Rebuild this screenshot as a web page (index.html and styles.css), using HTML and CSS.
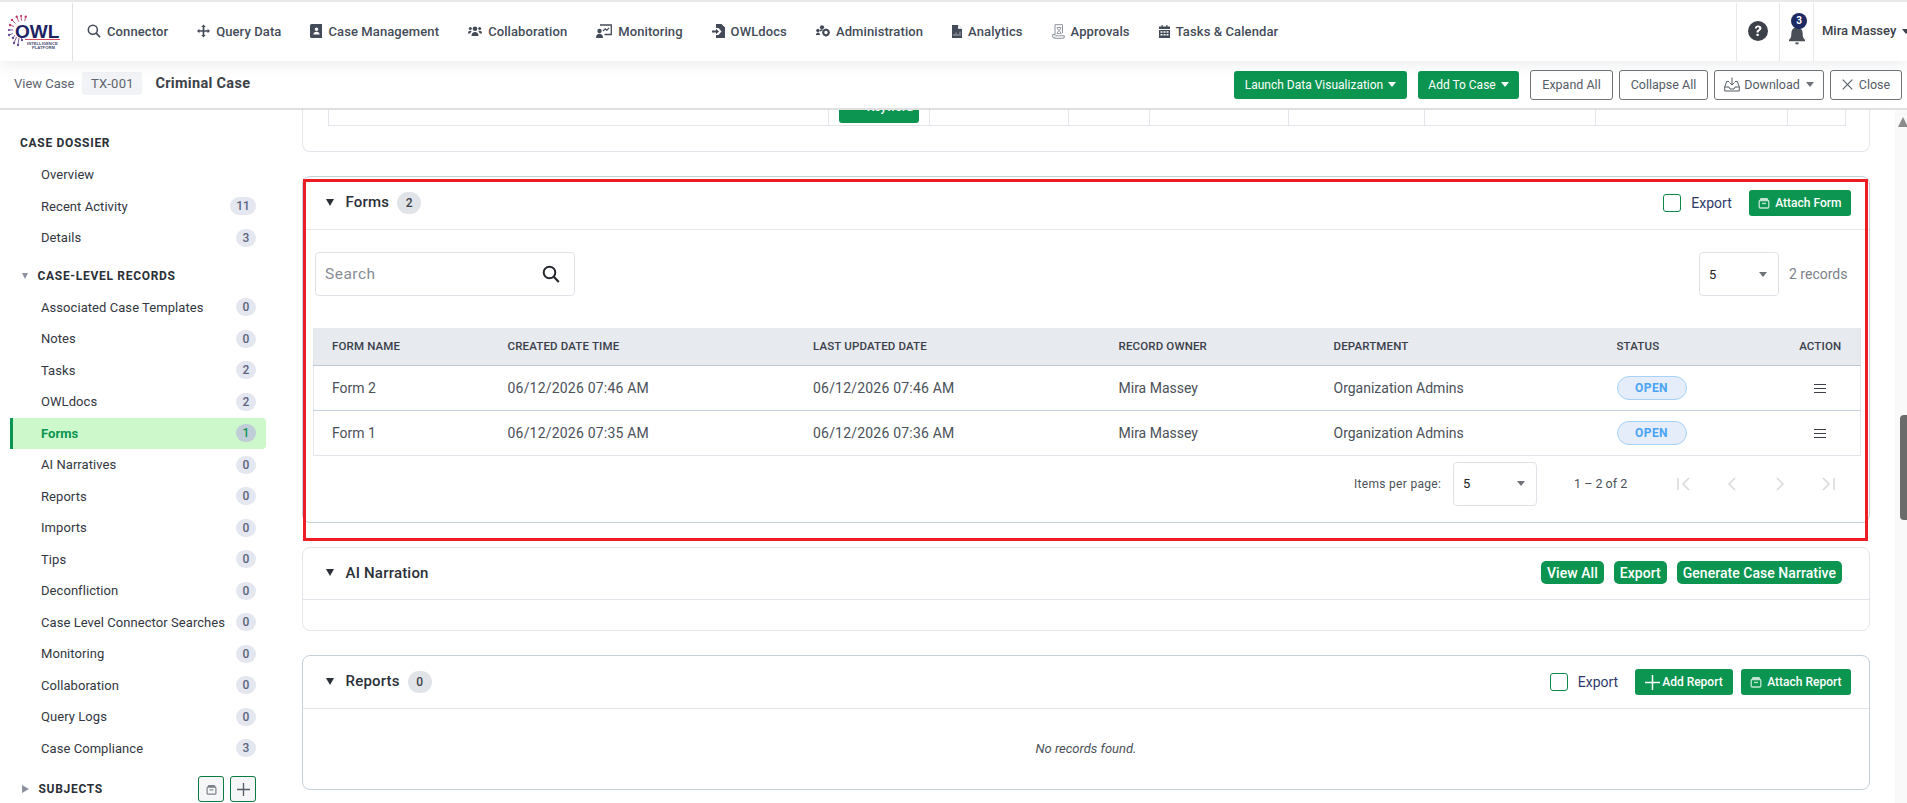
FILE: index.html
```html
<!DOCTYPE html>
<html lang="en">
<head>
    <meta charset="UTF-8">
    <title>View Case</title>
    <link rel="stylesheet" href="styles.css">
</head>
<body>
<svg class="defs" width="0" height="0">
    <symbol id="i-box" viewBox="0 0 12 12">
        <path d="M2.500 1h7l1 2.500h-9z" fill="currentColor"/>
        <rect x="1.200" y="3.500" width="9.600" height="7.500" rx="1" fill="none" stroke="currentColor" stroke-width="1.300"/>
        <rect x="4" y="5.800" width="4" height="1.300" fill="currentColor"/>
    </symbol>
    <symbol id="i-plus" viewBox="0 0 14 14">
        <path d="M7 0v14M0 7h14" fill="none" stroke="currentColor" stroke-width="1.400"/>
    </symbol>
    <symbol id="i-search" viewBox="0 0 18 18">
        <circle cx="7.500" cy="7.500" r="5.800" fill="none" stroke="currentColor" stroke-width="2"/>
        <path d="M11.800 11.800l5 5.200" fill="none" stroke="currentColor" stroke-width="2.200"/>
    </symbol>
</svg>

<!-- top navigation -->
<header class="topnav">
    <a class="logo">
        <svg width="60" height="36" viewBox="0 0 60 36">
            <g fill="none" stroke="#b0476f" stroke-width=".9">
                <path d="M4 5l3.500 3.500M8.700 1.700l2 5M13 .7l.5 5M17.700 1.700l-1 4.500M2 10l4 1.500"/>
            </g>
            <g fill="none" stroke="#6a4f95" stroke-width=".9">
                <path d="M0 15h5M1 20l4-1.500M5 23l2-3M6 28l2.500-6M10 30l1-7M14 25l-1-3"/>
            </g>
            <g fill="#c23a62">
                <circle cx="4" cy="5" r="1.200"/><circle cx="8.700" cy="1.700" r="1.200"/><circle cx="13" cy=".9" r="1"/><circle cx="17.700" cy="1.700" r="1.200"/><circle cx="2" cy="10" r="1.200"/>
            </g>
            <g fill="#6a4f95">
                <circle cx="1" cy="15" r="1.100"/><circle cx="1" cy="20" r="1.200"/><circle cx="5" cy="23" r="1.200"/><circle cx="6" cy="28" r="1.200"/><circle cx="10" cy="30" r="1.200"/><circle cx="14" cy="25" r="1.200"/>
            </g>
            <text class="logo-owl" x="7" y="23">OWL</text>
            <path d="M17 24.500H52" stroke="#d8475f" stroke-width="1.100"/>
            <text class="logo-sub" x="19" y="29.500">INTELLIGENCE</text>
            <text class="logo-sub" x="24" y="34">PLATFORM</text>
        </svg>
    </a>
    <nav class="menu">
        <a><svg class="ico" width="14" height="14" viewBox="0 0 18 18"><use href="#i-search"/></svg>Connector</a>
        <a><svg class="ico" width="13" height="14" viewBox="0 0 14 14"><path d="M7 0l2.400 2.600H7.900v3.500h3.500V4.600L14 7l-2.600 2.400V7.900H7.900v3.500h1.500L7 14l-2.400-2.600h1.500V7.900H2.600v1.500L0 7l2.600-2.400v1.500h3.500V2.600H4.600z" fill="currentColor"/></svg>Query Data</a>
        <a><svg class="ico" width="12" height="14" viewBox="0 0 12 14"><path d="M1.500 0H12v14H1.500A1.500 1.500 0 0 1 0 12.500V1.500A1.500 1.500 0 0 1 1.500 0zM6.500 3.500a1.800 1.800 0 1 0 0 3.600 1.800 1.800 0 0 0 0-3.600zM3.400 10.500h6.200c0-1.700-1.400-2.700-3.100-2.700s-3.100 1-3.100 2.700z" fill="currentColor" fill-rule="evenodd"/></svg>Case Management</a>
        <a><svg class="ico" width="14" height="12" viewBox="0 0 14 12"><circle cx="7" cy="3.800" r="2.300" fill="currentColor"/><path d="M3.500 11c0-2.600 1.400-4 3.500-4s3.500 1.400 3.500 4z" fill="currentColor"/><circle cx="2.300" cy="3.500" r="1.500" fill="currentColor"/><circle cx="11.700" cy="3.500" r="1.500" fill="currentColor"/><path d="M0 8.500C0 6.500 1 5.800 2.500 5.800c.6 0 1 .2 1.300.4C2.800 7 2.400 7.800 2.300 8.500zM14 8.500c0-2-1-2.700-2.500-2.700-.6 0-1 .2-1.300.4 1 .8 1.400 1.600 1.500 2.300z" fill="currentColor"/></svg>Collaboration</a>
        <a><svg class="ico" width="16" height="14" viewBox="0 0 16 14"><path d="M4 1h11.300v9.500H8.500" fill="none" stroke="currentColor" stroke-width="1.300"/><path d="M7 7l2.200-2.200 1.600 1.500L13 3.800" fill="none" stroke="currentColor" stroke-width="1.200"/><circle cx="3.500" cy="7" r="2.200" fill="currentColor"/><path d="M0 14c0-3 1.500-4.300 3.500-4.300S7 11 7 14z" fill="currentColor"/></svg>Monitoring</a>
        <a><svg class="ico" width="13" height="14" viewBox="0 0 13 14"><path d="M4 0h5.500L13 3.500V14H4v-3h2.500l3-3.500-3-3.500H4z" fill="currentColor"/><path d="M0 6.500h4V4.800l3 2.700-3 2.700V8.500H0z" fill="currentColor"/></svg>OWLdocs</a>
        <a><svg class="ico" width="14" height="12" viewBox="0 0 14 12"><circle cx="6" cy="2.300" r="2.100" fill="currentColor"/><circle cx="1.900" cy="5.500" r="1.700" fill="currentColor"/><path d="M0 10c0-1.500.8-2.500 2-2.500S4 8.500 4 10z" fill="currentColor"/><circle cx="10" cy="7.500" r="2.700" fill="none" stroke="currentColor" stroke-width="2"/><path d="M10 3.700v1.600M10 9.800v1.600M6.300 7.500h1.500M12.300 7.500h1.500" stroke="currentColor" stroke-width="1.300"/><path d="M4 6c.6-.8 1.200-1 2.500-1" stroke="currentColor" stroke-width="1.500" fill="none"/></svg>Administration</a>
        <a><svg class="ico" width="10" height="13" viewBox="0 0 10 13"><path d="M0 0h6.500L10 3.500V13H0z" fill="currentColor"/><path d="M6.500 0v3.500H10" fill="#fff" stroke="#fff" stroke-width=".7"/><path d="M2 11V9M4 11V7.500M6 11V9M8 11V6.500" stroke="#a9b0bb" stroke-width="1"/></svg>Analytics</a>
        <a><svg class="ico approvals" width="13" height="15" viewBox="0 0 13 15"><path d="M3 .7h7.500V9M2.500 14.300H11a1.300 1.300 0 0 0 1.300-1.300v-1.200H4M3 .7v11M3 12.500a1 1 0 0 1-2.300.5V10.500H3" fill="none" stroke="currentColor" stroke-width="1"/><path d="M5 3.500h4l-1.600 3 1.800 3H5l1.700-3z" fill="none" stroke="currentColor" stroke-width=".9"/></svg>Approvals</a>
        <a><svg class="ico" width="11" height="13" viewBox="0 0 11 13"><path d="M2.500 0h1.200v1.500h3.600V0h1.200v1.500H11V4H0V1.500h2.500zM0 5h11v8H0zM1.500 6.300v1.500h2V6.300zm3 0v1.500h2V6.300zm3 0v1.500h2V6.300zm-6 2.700v1.500h2V9zm3 0v1.500h2V9zm3 0v1.500h2V9z" fill="currentColor" fill-rule="evenodd"/></svg>Tasks &amp; Calendar</a>
    </nav>
    <div class="nav-right">
        <div class="nav-cell help">
            <svg width="20" height="20" viewBox="0 0 20 20"><circle cx="10" cy="10" r="10" fill="#3c4149"/><path d="M6.900 7.600C7 5.700 8.300 4.600 10.200 4.600c1.900 0 3.200 1.100 3.200 2.700 0 1.300-.8 2-1.800 2.600-.7.500-1 .8-1 1.600H8.500c0-1.500.5-2.200 1.500-2.800.8-.5 1.200-.8 1.200-1.400 0-.6-.4-1-1.100-1-.8 0-1.200.5-1.300 1.300z" fill="#fff"/><rect x="8.500" y="12.800" width="2.200" height="2.300" rx=".5" fill="#fff"/></svg>
        </div>
        <div class="nav-cell bell">
            <svg width="16" height="19" viewBox="0 0 17 20"><path d="M8.500 0c1 0 1.600.7 1.600 1.500C13 2.300 14.500 4.500 14.500 7.500c0 4 .8 5.500 2.500 7v1.500H0v-1.500c1.700-1.500 2.500-3 2.500-7C2.500 4.500 4 2.300 6.900 1.500 6.900.7 7.500 0 8.500 0zM6.500 17.500h4a2 2 0 0 1-4 0z" fill="#4a4f57"/></svg>
            <span class="bell-count">3</span>
        </div>
        <div class="nav-user">Mira Massey <i class="caret caret-dark"></i></div>
    </div>
</header>

<!-- case title bar -->
<div class="subbar">
    <span class="crumb">View Case</span>
    <span class="chip">TX-001</span>
    <span class="case-name">Criminal Case</span>
    <div class="actions">
        <button class="btn btn-green btn-launch">Launch Data Visualization <i class="caret"></i></button>
        <button class="btn btn-green btn-add">Add To Case <i class="caret"></i></button>
        <button class="btn btn-line btn-expand">Expand All</button>
        <button class="btn btn-line btn-collapse">Collapse All</button>
        <button class="btn btn-line btn-download">
            <svg width="16" height="15" viewBox="0 0 16 15"><path d="M8 .5v7M5.500 5.500L8 8l2.500-2.500M5 4.500H2.700L.7 10v4h14.600v-4l-2-5.500H11M.7 10h4.300l1 2h4l1-2h4.300" fill="none" stroke="currentColor" stroke-width="1"/></svg>
            Download <i class="caret caret-grey"></i>
        </button>
        <button class="btn btn-line btn-close">
            <svg width="11" height="11" viewBox="0 0 11 11"><path d="M.7.7l9.600 9.600M10.300.7L.7 10.300" stroke="currentColor" stroke-width="1.100"/></svg>
            Close
        </button>
    </div>
</div>

<div class="page">
    <!-- left sidebar -->
    <aside class="side">
        <div class="side-head">CASE DOSSIER</div>
        <a class="side-item">Overview</a>
        <a class="side-item">Recent Activity <span class="count">11</span></a>
        <a class="side-item">Details <span class="count">3</span></a>

        <div class="side-head side-head-sub"><i class="tri-down"></i>CASE-LEVEL RECORDS</div>
        <a class="side-item">Associated Case Templates <span class="count">0</span></a>
        <a class="side-item">Notes <span class="count">0</span></a>
        <a class="side-item">Tasks <span class="count">2</span></a>
        <a class="side-item">OWLdocs <span class="count">2</span></a>
        <a class="side-item active">Forms <span class="count">1</span></a>
        <a class="side-item">AI Narratives <span class="count">0</span></a>
        <a class="side-item">Reports <span class="count">0</span></a>
        <a class="side-item">Imports <span class="count">0</span></a>
        <a class="side-item">Tips <span class="count">0</span></a>
        <a class="side-item">Deconfliction <span class="count">0</span></a>
        <a class="side-item">Case Level Connector Searches <span class="count">0</span></a>
        <a class="side-item">Monitoring <span class="count">0</span></a>
        <a class="side-item">Collaboration <span class="count">0</span></a>
        <a class="side-item">Query Logs <span class="count">0</span></a>
        <a class="side-item">Case Compliance <span class="count">3</span></a>

        <div class="side-head side-head-sub side-head-last">
            <i class="tri-right"></i>SUBJECTS
            <span class="side-btns">
                <button class="side-btn"><svg class="faded" width="11" height="11"><use href="#i-box"/></svg></button>
                <button class="side-btn"><svg width="13" height="13"><use href="#i-plus"/></svg></button>
            </span>
        </div>
    </aside>

    <main class="main">
        <!-- the card above, scrolled mostly out of view -->
        <section class="card card-cut">
            <table class="cut-table">
                <colgroup>
                    <col class="c1"><col class="c2"><col class="c3"><col class="c4"><col class="c5"><col class="c6"><col class="c7"><col class="c8"><col class="c9">
                </colgroup>
                <tr>
                    <td></td>
                    <td class="cut-btn-cell"><span class="cut-btn">Keyword</span></td>
                    <td></td><td></td><td></td><td></td><td></td><td></td><td></td>
                </tr>
            </table>
        </section>

        <section class="card card-forms">
            <div class="highlight"></div>
            <div class="card-head head-forms">
                <i class="tri-card"></i><h3>Forms</h3><span class="head-count">2</span>
                <div class="head-tools">
                    <label class="export"><span class="check"></span>Export</label>
                    <button class="btn-small"><svg class="faded" width="12" height="12"><use href="#i-box"/></svg>Attach Form</button>
                </div>
            </div>

            <div class="tools">
                <div class="search">
                    <span>Search</span>
                    <svg width="18" height="18"><use href="#i-search"/></svg>
                </div>
                <div class="select select-top"><span>5</span><i class="caret caret-grey"></i></div>
                <span class="records">2 records</span>
            </div>

            <table class="grid">
                <colgroup>
                    <col class="g1"><col class="g2"><col class="g3"><col class="g4"><col class="g5"><col class="g6"><col class="g7">
                </colgroup>
                <thead>
                    <tr>
                        <th>FORM NAME</th><th>CREATED DATE TIME</th><th>LAST UPDATED DATE</th><th>RECORD OWNER</th><th>DEPARTMENT</th><th>STATUS</th><th class="center">ACTION</th>
                    </tr>
                </thead>
                <tbody>
                    <tr>
                        <td>Form 2</td><td class="date">06/12/2026 07:46 AM</td><td class="date">06/12/2026 07:46 AM</td><td>Mira Massey</td><td>Organization Admins</td>
                        <td><span class="pill">OPEN</span></td>
                        <td class="center"><span class="burger"></span></td>
                    </tr>
                    <tr>
                        <td>Form 1</td><td class="date">06/12/2026 07:35 AM</td><td class="date">06/12/2026 07:36 AM</td><td>Mira Massey</td><td>Organization Admins</td>
                        <td><span class="pill">OPEN</span></td>
                        <td class="center"><span class="burger"></span></td>
                    </tr>
                </tbody>
            </table>

            <div class="pager">
                <span class="pager-label">Items per page:</span>
                <div class="select select-pager"><span>5</span><i class="caret caret-grey"></i></div>
                <span class="pager-range">1 – 2 of 2</span>
                <div class="pager-nav">
                    <svg width="14" height="14" viewBox="0 0 14 14"><path d="M1 1v12M12 1L6 7l6 6" fill="none" stroke="currentColor" stroke-width="1.500"/></svg>
                    <svg width="8" height="14" viewBox="0 0 8 14"><path d="M7 1L1 7l6 6" fill="none" stroke="currentColor" stroke-width="1.500"/></svg>
                    <svg class="pager-next" width="8" height="14" viewBox="0 0 8 14"><path d="M1 1l6 6-6 6" fill="none" stroke="currentColor" stroke-width="1.500"/></svg>
                    <svg width="14" height="14" viewBox="0 0 14 14"><path d="M13 1v12M2 1l6 6-6 6" fill="none" stroke="currentColor" stroke-width="1.500"/></svg>
                </div>
            </div>
        </section>

        <section class="card card-ai">
            <div class="card-head head-ai">
                <i class="tri-card"></i><h3>AI Narration</h3>
                <div class="head-tools head-tools-ai">
                    <button class="btn-pill">View All</button>
                    <button class="btn-pill">Export</button>
                    <button class="btn-pill">Generate Case Narrative</button>
                </div>
            </div>
            <div class="ai-body"></div>
        </section>

        <section class="card card-reports">
            <div class="card-head head-reports">
                <i class="tri-card"></i><h3>Reports</h3><span class="head-count">0</span>
                <div class="head-tools">
                    <label class="export"><span class="check"></span>Export</label>
                    <button class="btn-small btn-small-add"><svg width="15" height="15"><use href="#i-plus"/></svg>Add Report</button>
                    <button class="btn-small"><svg class="faded" width="12" height="12"><use href="#i-box"/></svg>Attach Report</button>
                </div>
            </div>
            <p class="empty">No records found.</p>
        </section>
    </main>

    <div class="scroll-track">
        <i class="scroll-up"></i>
        <div class="scroll-thumb"></div>
    </div>
</div>
</body>
</html>
```

FILE: styles.css
```css
* {
    margin: 0;
    padding: 0;
    box-sizing: border-box;
}
html, body {
    height: 803px;
    overflow: hidden;
}
body {
    font-family: Roboto, "Noto Sans", sans-serif;
    font-size: 13px;
    color: #3a3f4b;
    background-color: #fff;
}
button {
    font-family: inherit;
    border: 0;
    background: none;
}
.defs {
    position: absolute;
}
.faded {
    opacity: .75;
}

/* carets */
.caret {
    display: inline-block;
    width: 0;
    height: 0;
    border-left: 4px solid transparent;
    border-right: 4px solid transparent;
    border-top: 5px solid #fff;
    vertical-align: middle;
    margin-left: 2px;
}
.caret-dark {
    border-top-color: #3c4149;
}
.caret-grey {
    border-top-color: #6f7379;
}

/* top navigation */
.topnav {
    height: 61px;
    display: flex;
    border-top: 2px solid #e8e8e8;
    background-color: #fff;
    box-shadow: 0 3px 14px rgba(60, 70, 90, .1);
    position: relative;
    z-index: 3;
    padding-top: 1px;
}
.logo {
    width: 73px;
    height: 58px;
    border-right: 1px solid #e3e3e3;
    padding: 12px 0 0 8px;
}
.logo-owl {
    font: 800 19px "Liberation Sans", sans-serif;
    fill: #1d2364;
}
.logo-sub {
    font: 700 4.200px "Liberation Sans", sans-serif;
    fill: #4b4f78;
}
.menu {
    display: flex;
    align-items: center;
    gap: 29px;
    padding: 0 0 2px 14px;
    height: 58px;
    font-size: 13px;
    font-weight: 500;
    color: #444b58;
    letter-spacing: .1px;
    flex: 1;
}
.menu a {
    display: flex;
    align-items: center;
    gap: 6px;
    white-space: nowrap;
}
.ico {
    fill: currentColor;
    flex: none;
}
.approvals {
    color: #8d929b;
}
.nav-right {
    display: flex;
    height: 58px;
    width: 171px;
}
.nav-cell {
    display: flex;
    align-items: center;
    justify-content: center;
    border-left: 1px solid #e8e8e8;
    height: 58px;
    padding-bottom: 2px;
}
.help {
    width: 43px;
}
.bell {
    width: 34px;
    position: relative;
    padding-top: 8px;
}
.bell-count {
    position: absolute;
    left: 11px;
    top: 10px;
    width: 16px;
    height: 16px;
    border-radius: 50%;
    background-color: #1d2a63;
    color: #fff;
    font-size: 10px;
    font-weight: 700;
    line-height: 16px;
    text-align: center;
}
.nav-user {
    flex: 1;
    border-left: 1px solid #e8e8e8;
    padding: 0 0 0 8px;
    line-height: 56px;
    font-size: 13px;
    font-weight: 500;
    color: #3c4149;
    white-space: nowrap;
    overflow: hidden;
}

/* case title bar */
.subbar {
    height: 49px;
    display: flex;
    align-items: center;
    padding: 0 5px 0 14px;
    border-bottom: 2px solid #e0e0e0;
    background-color: #fff;
    position: relative;
    z-index: 2;
}
.crumb {
    font-size: 13px;
    color: #5d6470;
    margin-bottom: 2px;
}
.chip {
    margin: 0 0 2px 8px;
    width: 60px;
    height: 23px;
    line-height: 23px;
    border-radius: 3px;
    background-color: #f1f3f6;
    color: #5d6470;
    text-align: center;
    font-size: 13px;
    letter-spacing: .3px;
}
.case-name {
    margin: 0 0 2px 13px;
    font-size: 14.500px;
    font-weight: 700;
    letter-spacing: .3px;
    color: #3c4149;
}
.actions {
    margin-left: auto;
    display: flex;
    align-items: center;
    gap: 6px;
}
.btn {
    font-size: 12.500px;
    height: 30px;
    border-radius: 3px;
    white-space: nowrap;
    display: flex;
    align-items: center;
    justify-content: center;
    gap: 3px;
}
.btn-green {
    height: 28px;
    background-color: #0b9550;
    color: #fff;
    font-size: 12px;
    margin-right: 5px;
}
.btn-line {
    border: 1px solid #6e7378;
    color: #555c66;
    background-color: #fff;
}
.btn-launch { width: 173px; }
.btn-add { width: 101px; }
.btn-expand { width: 83px; }
.btn-collapse { width: 89px; }
.btn-download { width: 110px; gap: 4px; }
.btn-close { width: 72px; gap: 6px; }

/* page */
.page {
    display: flex;
    height: 693px;
}
.side {
    width: 302px;
    flex: none;
    padding-top: 17px;
    overflow: hidden;
}
.side-head {
    height: 32px;
    line-height: 32px;
    padding-left: 20px;
    font-size: 12px;
    font-weight: 700;
    letter-spacing: .7px;
    color: #2b2f38;
}
.side-head-sub {
    display: flex;
    align-items: center;
    width: 266px;
    margin-top: 6px;
    padding-left: 22px;
}
.side-head-last {
    margin-top: 9px;
}
.tri-down, .tri-right {
    width: 0;
    height: 0;
    flex: none;
    margin-right: 9.500px;
}
.tri-down {
    border-left: 3.500px solid transparent;
    border-right: 3.500px solid transparent;
    border-top: 6px solid #8d919e;
}
.tri-right {
    border-top: 4px solid transparent;
    border-bottom: 4px solid transparent;
    border-left: 7px solid #8d919e;
}
.side-item {
    display: flex;
    align-items: center;
    justify-content: space-between;
    height: 31.500px;
    width: 256px;
    margin-left: 10px;
    padding: 0 10px 0 31px;
    font-size: 13px;
    letter-spacing: .06px;
    color: #33373f;
    white-space: nowrap;
}
.count {
    min-width: 20px;
    height: 18px;
    padding: 0 6px;
    border-radius: 9px;
    background-color: #e4e7ef;
    color: #5c6480;
    font-size: 12px;
    font-weight: 500;
    line-height: 18px;
    text-align: center;
}
.side-item.active {
    background-color: #ccf8cc;
    border-left: 3px solid #0b9550;
    border-radius: 0 4px 4px 0;
    padding-left: 28px;
    color: #0b9550;
    font-weight: 700;
}
.active .count {
    background-color: #bfcdd6;
    color: #0b9550;
}
.side-btns {
    margin-left: auto;
    margin-right: 10px;
    display: flex;
    gap: 6px;
}
.side-btn {
    width: 26px;
    height: 26px;
    border: 1px solid #0b7a3e;
    border-radius: 3px;
    background-color: #f4f6f8;
    color: #555c66;
    display: flex;
    align-items: center;
    justify-content: center;
}

/* cards */
.main {
    flex: 1;
    min-width: 0;
    padding-right: 25px;
    overflow: hidden;
}
.card {
    border: 1px solid #e2e6eb;
    border-radius: 8px;
    margin-bottom: 24px;
    background-color: #fff;
}
.card-cut {
    height: 42px;
    border-top: 0;
    border-radius: 0 0 8px 8px;
    padding-left: 25px;
}
.cut-table {
    width: 1517px;
    height: 15px;
    table-layout: fixed;
    border-collapse: collapse;
}
.cut-table td {
    height: 15px;
    border: 1px solid #e2e6eb;
    border-top: 0;
    overflow: hidden;
}
.c1 { width: 500px; }
.c2 { width: 101px; }
.c3 { width: 139px; }
.c4 { width: 81px; }
.c5 { width: 139px; }
.c6 { width: 136px; }
.c7 { width: 171px; }
.c8 { width: 192px; }
.c9 { width: 58px; }
.cut-btn-cell {
    vertical-align: bottom;
    padding: 0 10px 2px;
}
.cut-btn {
    display: block;
    height: 28px;
    margin-top: -15px;
    line-height: 24px;
    background-color: #0b9550;
    color: #fff;
    border-radius: 3px;
    text-align: right;
    padding-right: 6px;
    font-size: 12px;
    font-weight: 500;
}
.card-forms {
    position: relative;
    height: 347px;
    border-color: #c6d0da;
}
.highlight {
    position: absolute;
    left: 0;
    right: 1px;
    top: 2px;
    bottom: -19px;
    border: 3px solid #ee1c25;
    z-index: 1;
    pointer-events: none;
}
.card-head {
    display: flex;
    align-items: center;
    border-bottom: 1px solid #e2e6eb;
    padding-left: 23px;
}
.head-forms { height: 53px; }
.head-ai { height: 52px; }
.head-reports { height: 53px; }
.tri-card {
    width: 0;
    height: 0;
    border-left: 4px solid transparent;
    border-right: 4px solid transparent;
    border-top: 7px solid #2b2f38;
    margin: 0 11.500px 2px 0;
}
.card-head h3 {
    font-size: 15px;
    font-weight: 500;
    letter-spacing: .2px;
    color: #2b2f38;
    margin-bottom: 2px;
}
.head-count {
    margin-left: 8px;
    width: 24px;
    height: 22px;
    border-radius: 11px;
    background-color: #e0e3e8;
    color: #3c4149;
    font-size: 12px;
    font-weight: 500;
    line-height: 22px;
    text-align: center;
}
.head-tools {
    margin-left: auto;
    padding-right: 18px;
    display: flex;
    align-items: center;
    gap: 8px;
}
.head-tools-ai {
    padding-right: 27px;
    gap: 10px;
    margin-bottom: 2px;
}
.export {
    display: flex;
    align-items: center;
    gap: 10px;
    font-size: 14px;
    color: #2e3a6b;
    margin-right: 9px;
}
.check {
    width: 18px;
    height: 18px;
    border: 1px solid #0b8a4a;
    border-radius: 3px;
}
.btn-small {
    height: 26px;
    padding: 0 9.500px;
    border-radius: 3px;
    background-color: #0b9550;
    color: #fff;
    font-size: 12px;
    font-weight: 500;
    display: flex;
    align-items: center;
    gap: 5px;
}
.btn-small-add {
    gap: 2px;
    padding: 0 10px;
}
.btn-pill {
    height: 23px;
    padding: 0 6px;
    border-radius: 5px;
    background-color: #0b9550;
    color: #fff;
    font-size: 14px;
    font-weight: 500;
    letter-spacing: .04px;
}

/* forms body */
.tools {
    display: flex;
    align-items: center;
    padding: 22px 20px 0 12px;
}
.search {
    width: 260px;
    height: 44px;
    border: 1px solid #dfe3e8;
    border-radius: 4px;
    display: flex;
    align-items: center;
    justify-content: space-between;
    padding: 0 14px 0 9px;
    font-size: 15.500px;
    letter-spacing: .5px;
    color: #868c94;
    margin-right: auto;
}
.search svg {
    color: #24282e;
}
.select {
    height: 44px;
    border: 1px solid #dfe3e8;
    border-radius: 4px;
    display: flex;
    align-items: center;
    justify-content: space-between;
    color: #222;
    font-size: 13px;
}
.select-top {
    width: 80px;
    padding: 0 11px 0 9px;
}
.select-pager {
    width: 84px;
    padding: 0 11px 0 9px;
}
.records {
    margin-left: 10px;
    width: 60px;
    font-size: 14px;
    color: #7c828a;
    white-space: nowrap;
}
.grid {
    width: 1547px;
    margin: 32px 0 0 10px;
    border-collapse: collapse;
    table-layout: fixed;
    border: 1px solid #e2e6eb;
    border-top: 0;
}
.g1 { width: 175px; }
.g2 { width: 305.500px; }
.g3 { width: 305.500px; }
.g4 { width: 215px; }
.g5 { width: 283px; }
.g6 { width: 183px; }
.g7 { width: 80px; }
.grid th {
    height: 37px;
    padding-left: 19px;
    background-color: #e7eaee;
    border-bottom: 1px solid #bccad6;
    text-align: left;
    font-size: 11.500px;
    font-weight: 500;
    letter-spacing: .15px;
    color: #3a3f4b;
}
.grid td {
    height: 45px;
    padding-left: 19px;
    border-bottom: 1px solid #c6d3de;
    font-size: 14px;
    color: #4b5159;
}
.grid th:first-child, .grid td:first-child {
    padding-left: 18px;
}
.grid .date {
    letter-spacing: .2px;
}
.grid tr:last-child td {
    border-bottom-color: #e2e6eb;
}
.grid .center {
    padding: 0;
    text-align: center;
}
.pill {
    display: block;
    width: 70px;
    height: 24px;
    border: 1px solid #a6d2f7;
    border-radius: 12px;
    background-color: #e4edf9;
    color: #4aa3f5;
    font-size: 12px;
    font-weight: 700;
    line-height: 22px;
    letter-spacing: .4px;
    text-align: center;
}
.burger {
    display: inline-block;
    width: 12px;
    height: 9px;
    border-top: 1px solid #3a3f4b;
    border-bottom: 1px solid #3a3f4b;
    position: relative;
    vertical-align: middle;
}
.burger::after {
    content: "";
    position: absolute;
    left: 0;
    right: 0;
    top: 3px;
    border-top: 1px solid #3a3f4b;
}
.pager {
    display: flex;
    align-items: center;
    height: 50px;
    margin-top: 3px;
    padding-left: 1051px;
    font-size: 12px;
    color: #4b5159;
}
.pager-label {
    width: 99px;
    letter-spacing: .3px;
    white-space: nowrap;
}
.pager-range {
    margin-left: 37px;
    width: 53px;
    white-space: nowrap;
    font-size: 12.500px;
}
.pager-nav {
    margin-left: 50px;
    display: flex;
    align-items: center;
    gap: 37px;
    color: #d8d8d8;
}
.pager-next {
    margin-left: 3px;
}
.ai-body {
    height: 30px;
}
.card-ai {
    height: 84px;
}
.card-reports {
    height: 135px;
    border-color: #c5d0db;
}
.empty {
    height: 80px;
    line-height: 80px;
    text-align: center;
    font-style: italic;
    font-size: 13px;
    color: #4b5159;
}

/* page scrollbar */
.scroll-track {
    width: 12px;
    flex: none;
    background-color: #f9f9f9;
    padding-top: 7px;
}
.scroll-up {
    display: block;
    width: 0;
    height: 0;
    margin-left: 3px;
    border-left: 5px solid transparent;
    border-right: 5px solid transparent;
    border-bottom: 10px solid #8b8b8b;
}
.scroll-thumb {
    width: 8px;
    height: 105px;
    margin: 288px 0 0 5px;
    border-radius: 4px 0 0 4px;
    background-color: #6b6b6b;
}
```
